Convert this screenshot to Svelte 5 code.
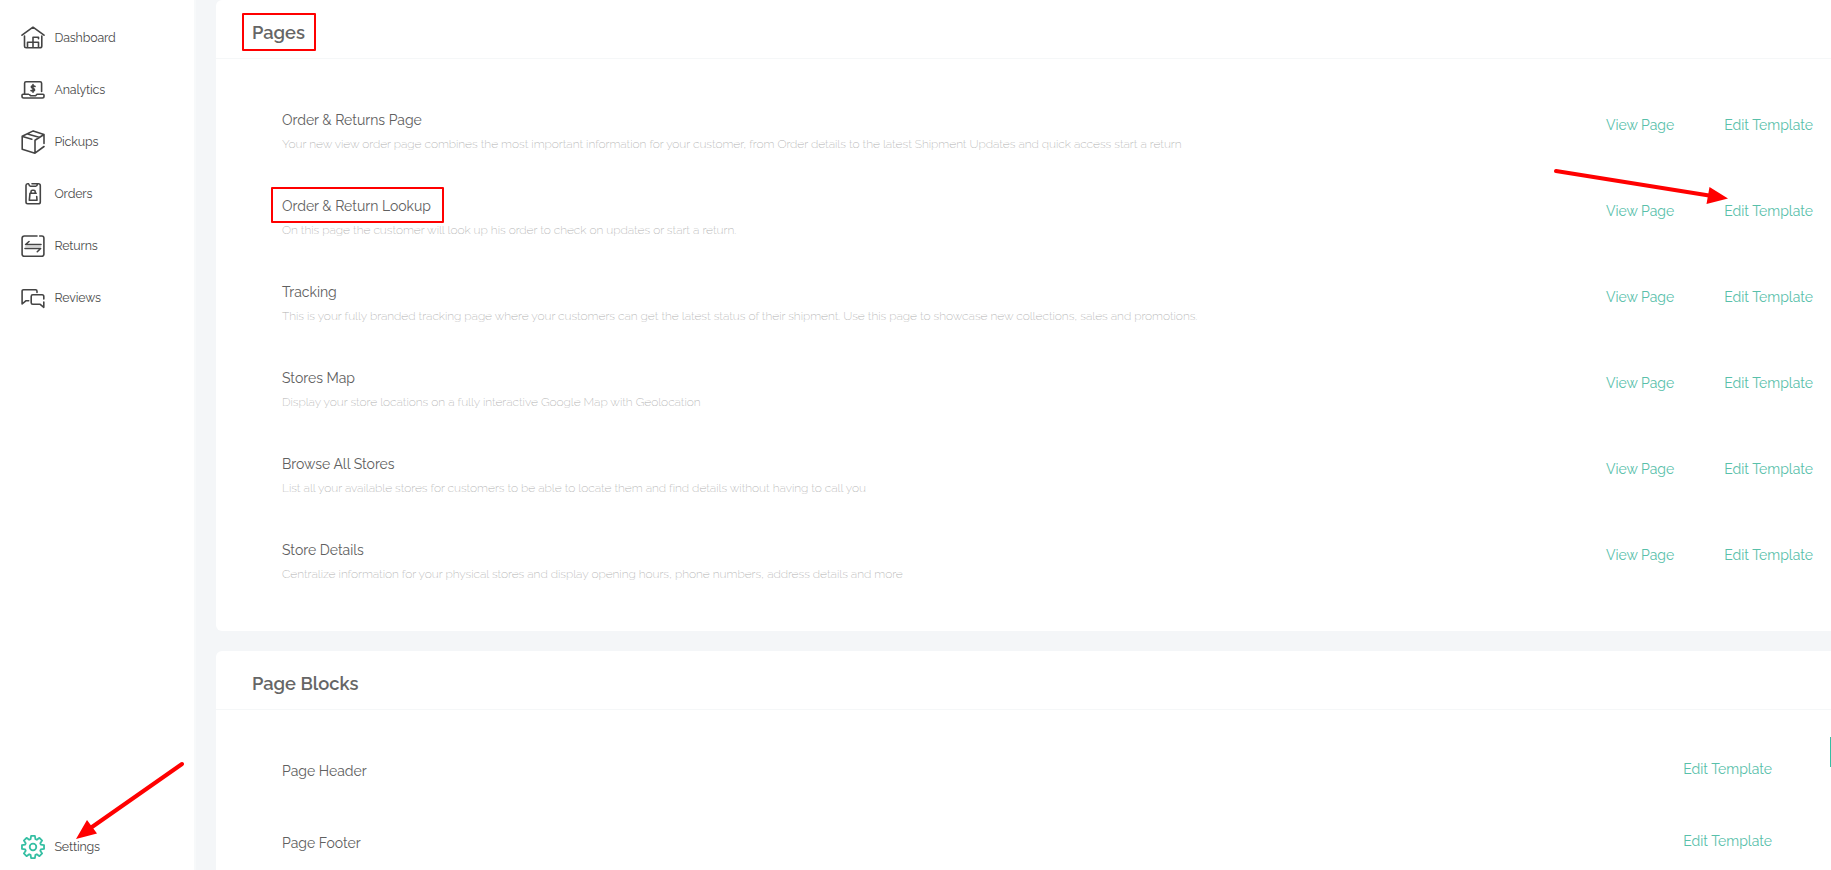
<script>
  const nav = [
    { label: 'Dashboard', icon: 'home' },
    { label: 'Analytics', icon: 'laptop' },
    { label: 'Pickups', icon: 'box' },
    { label: 'Orders', icon: 'clipboard' },
    { label: 'Returns', icon: 'swap' },
    { label: 'Reviews', icon: 'chat' }
  ];

  const pages = [
    { title: 'Order & Returns Page', text: 'Your new view order page combines the most important information for your customer, from Order details to the latest Shipment Updates and quick access start a return' },
    { title: 'Order & Return Lookup', marked: true, text: 'On this page the customer will look up his order to check on updates or start a return.' },
    { title: 'Tracking', text: 'This is your fully branded tracking page where your customers can get the latest status of their shipment. Use this page to showcase new collections, sales and promotions.' },
    { title: 'Stores Map', text: 'Display your store locations on a fully interactive Google Map with Geolocation' },
    { title: 'Browse All Stores', text: 'List all your available stores for customers to be able to locate them and find details without having to call you' },
    { title: 'Store Details', text: 'Centralize information for your physical stores and display opening hours, phone numbers, address details and more' }
  ];

  const blocks = ['Page Header', 'Page Footer'];

  // Outline of the eight-toothed settings gear.
  const gear = (() => {
    const pts = [];
    for (let i = 0; i < 8; i++) {
      const c = (i * Math.PI) / 4;
      for (const [r, a] of [[8.2, -0.3], [11.2, -0.17], [11.2, 0.17], [8.2, 0.3]]) {
        pts.push(`${(12 + r * Math.sin(c + a)).toFixed(2)} ${(12 - r * Math.cos(c + a)).toFixed(2)}`);
      }
    }
    return `M${pts.join('L')}Z`;
  })();
</script>

<div class="app">
  <aside>
    <nav>
      {#each nav as item}
        <a class="item" href="#top">
          <svg class="icon" viewBox="0 0 24 24">
            {#if item.icon === 'home'}
              <path d="M1 9.2 12 1.2 23 9.2M3.5 10V20.2Q3.5 21.8 5.2 21.8H18.8Q20.8 21.8 20.8 20.2V10M6.5 21.3V16.2H17.5V21.3M12 21.3V11.2H17.5V12.8" />
            {:else if item.icon === 'laptop'}
              <path d="M3.6 15.7V5.3Q3.6 3.8 5 3.8H19Q20.6 3.8 20.6 5.3V13.5M7.5 16.3H2Q1 16.3 1 17.3V18.3Q1 20 2.7 20H21.3Q23 20 23 18.3V17.3Q23 16.3 22 16.3H16L14.6 17.7H9.6L8.7 16.9" />
              <path d="M14 8.5Q11.8 7 10.5 8.4C9.3 10.2 14.2 10.2 13.6 12.2Q12.6 13.8 10 12.5M12 6.5V14.2" />
            {:else if item.icon === 'box'}
              <path d="M23 13.5V4.4L12.2.9 1.2 6.3V19.3L14 23.2 23 16.5M14 22.8V10.2L22.6 4.8M1.6 6.6 10.8 9.2M6.5 4 18 7.2" />
            {:else if item.icon === 'clipboard'}
              <path d="M7.6 1.8H6.6Q5 1.8 5 3.5V20.1Q5 21.8 6.7 21.8H17.4Q19.3 21.8 19.3 20V3.5Q19.3 1.8 17.4 1.8H11M7.8 2.2Q8.2 4.2 9.5 4.2H14.8Q16.2 4.2 16.4 2.2M15.7 14.5 16 18.3H8.3L9 11.2H13.8M10 11V9.8Q10 8.3 11.4 8.3H12.8Q14.2 8.3 14.2 9.8V11.2H15.2" />
            {:else if item.icon === 'swap'}
              <path d="M5 12.5H19.5" stroke="#d4d4d4" />
              <path d="M16 2H3.4Q1.1 2 1.1 4.3V20Q1.1 22.3 3.4 22.3H20.5Q22.9 22.3 22.9 20V4.2Q22.9 2 20.8 2H18.7M20 10.5H4.6L8 7.5M4 14.5H19.6L16.3 17.7" />
            {:else}
              <path d="M16 6.4V5.2Q16 3.8 14.6 3.8H2.5Q1.1 3.8 1.1 5.2V18L4.8 14.8H7.7M22.8 13V10.5Q22.8 8.8 21.1 8.8H11.8Q10.2 8.8 10.2 10.4V16.7Q10.2 18.3 11.8 18.3H19.2L22.8 21.3V16" />
            {/if}
          </svg>
          <span>{item.label}</span>
        </a>
      {/each}
    </nav>
    <a class="item settings" href="#top">
      <svg class="icon" viewBox="0 0 24 24">
        <path d={gear} />
        <circle cx="12" cy="12" r="3.3" />
      </svg>
      <span>Settings</span>
    </a>
  </aside>

  <main>
    <section class="card pages">
      <header><h2><span class="anchor">Pages<i class="mark mark-head"></i></span></h2></header>
      <div class="rows">
        {#each pages as p}
          <div class="row">
            <div class="info">
              <h3><span class="anchor">{p.title}{#if p.marked}<i class="mark mark-row"></i>{/if}</span></h3>
              <p>{p.text}</p>
            </div>
            <div class="links">
              <a href="#top">View Page</a>
              <a href="#top">Edit Template</a>
            </div>
          </div>
        {/each}
      </div>
    </section>

    <section class="card blocks">
      <header><h2>Page Blocks</h2></header>
      <div class="rows">
        {#each blocks as title}
          <div class="row">
            <div class="info"><h3>{title}</h3></div>
            <div class="links"><a href="#top">Edit Template</a></div>
          </div>
        {/each}
      </div>
    </section>
  </main>

  <svg class="overlay" viewBox="0 0 1831 870">
    <path d="M1556 171 1709 195.4M182 764 92 827" stroke="#f00" stroke-width="4" stroke-linecap="round" />
    <path d="M1728 198.5 1709.5 187 1706.5 204ZM76 839 87 820 97 833.5Z" fill="#f00" />
  </svg>
  <i class="handle"></i>
</div>

<style>
  :global(body) {
    overflow: hidden;
  }
  .app {
    position: relative;
    display: flex;
    width: 1831px;
    height: 870px;
    overflow: hidden;
    background: #f4f6f8;
    font-family: Raleway, Lato, sans-serif;
    color: #555;
    white-space: nowrap;
  }
  a {
    color: inherit;
    text-decoration: none;
  }
  aside {
    display: flex;
    flex-direction: column;
    justify-content: space-between;
    box-sizing: border-box;
    width: 196px;
    flex: none;
    padding-top: 12px;
    border-right: 2px solid #f7f9fa;
    background: #fff;
  }
  .item {
    display: flex;
    align-items: center;
    gap: 9.5px;
    height: 52px;
    padding-left: 21px;
    font-size: 12.4px;
    letter-spacing: -0.15px;
    line-height: 16px;
    color: #4c4c4c;
  }
  .item span {
    padding-bottom: 1px;
  }
  .settings {
    height: 46px;
  }
  .icon {
    width: 24px;
    height: 24px;
    flex: none;
    fill: none;
    stroke: #444;
    stroke-width: 1.6;
    stroke-linecap: round;
    stroke-linejoin: round;
  }
  .settings .icon {
    stroke: #35bfa3;
    stroke-width: 1.8;
  }
  main {
    display: flex;
    flex-direction: column;
    gap: 20px;
    flex: 1;
    padding-left: 20px;
  }
  .card {
    flex: none;
    background: #fff;
    border-radius: 6px 0 0 6px;
  }
  .pages {
    height: 631px;
  }
  .blocks {
    height: 240px;
  }
  header {
    display: flex;
    align-items: center;
    box-sizing: border-box;
    height: 59px;
    padding: 7px 0 0 36px;
    border-bottom: 1px solid #f5f7f8;
  }
  h2,
  h3,
  p {
    margin: 0;
  }
  h2 {
    font-size: 18.3px;
    line-height: 24px;
    font-weight: 600;
    color: #666;
  }
  h3 {
    font-size: 14px;
    line-height: 20px;
    font-weight: 400;
    color: #606060;
  }
  p {
    margin-top: 4px;
    font-size: 12px;
    line-height: 20px;
    font-weight: 200;
    letter-spacing: -0.05px;
    color: #b0b0b0;
  }
  .rows {
    padding: 51px 18px 0 66px;
  }
  .row {
    display: flex;
    justify-content: space-between;
    height: 86px;
  }
  .links {
    display: flex;
    gap: 50px;
    padding-top: 5px;
    font-size: 14px;
    line-height: 20px;
    color: #58c0aa;
  }
  .blocks .rows {
    padding-right: 59px;
  }
  .blocks .row {
    height: 72px;
  }
  .blocks .links {
    padding-top: 0;
    margin-top: -2px;
  }
  .anchor {
    position: relative;
  }
  .mark {
    position: absolute;
    box-sizing: border-box;
    border: 2px solid #f00;
    border-radius: 1px;
  }
  .mark-head {
    left: -10px;
    top: -9px;
    width: 74px;
    height: 38px;
  }
  .mark-row {
    left: -11px;
    top: -11px;
    width: 173px;
    height: 36px;
  }
  .overlay {
    position: absolute;
    inset: 0;
    width: 1831px;
    height: 870px;
    pointer-events: none;
  }
  .handle {
    position: absolute;
    right: 0;
    top: 737px;
    width: 1px;
    height: 30px;
    background: #35bfa3;
  }
</style>
